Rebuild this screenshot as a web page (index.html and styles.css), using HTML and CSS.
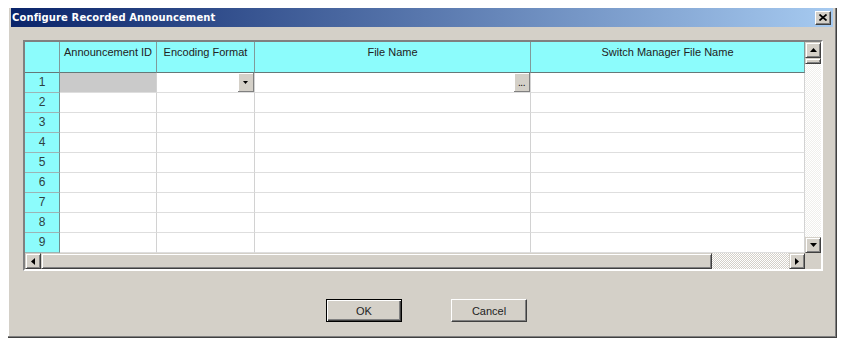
FILE: index.html
```
<!DOCTYPE html>
<html lang="en">

<head>
    <meta charset="UTF-8">
    <title>Configure Recorded Announcement</title>
    <link rel="stylesheet" href="styles.css">
</head>

<body>
    <div class="dialog">
        <div class="titlebar">
            <span class="title">Configure Recorded Announcement</span>
            <button class="close-btn" type="button">
                <svg width="8" height="7" viewBox="0 0 8 7">
                    <path d="M0.5 0.5 L7.5 6.5 M7.5 0.5 L0.5 6.5" stroke="#000" stroke-width="1.7" fill="none"/>
                </svg>
            </button>
        </div>

        <div class="client">
            <div class="grid">
                <div class="grid-top">
                    <div class="sheet">
                        <div class="row head">
                            <div class="cell rh"></div>
                            <div class="cell c1">Announcement ID</div>
                            <div class="cell c2">Encoding Format</div>
                            <div class="cell c3">File Name</div>
                            <div class="cell c4">Switch Manager File Name</div>
                        </div>
                        <div class="row">
                            <div class="cell rh">1</div>
                            <div class="cell c1 locked"></div>
                            <div class="cell c2">
                                <span class="cell-btn">
                                    <svg width="5" height="3" viewBox="0 0 5 3"><polygon points="0,0 5,0 2.5,3" fill="#000"/></svg>
                                </span>
                            </div>
                            <div class="cell c3"><span class="cell-btn dots">...</span></div>
                            <div class="cell c4"></div>
                        </div>
                        <div class="row"><div class="cell rh">2</div><div class="cell c1"></div><div class="cell c2"></div><div class="cell c3"></div><div class="cell c4"></div></div>
                        <div class="row"><div class="cell rh">3</div><div class="cell c1"></div><div class="cell c2"></div><div class="cell c3"></div><div class="cell c4"></div></div>
                        <div class="row"><div class="cell rh">4</div><div class="cell c1"></div><div class="cell c2"></div><div class="cell c3"></div><div class="cell c4"></div></div>
                        <div class="row"><div class="cell rh">5</div><div class="cell c1"></div><div class="cell c2"></div><div class="cell c3"></div><div class="cell c4"></div></div>
                        <div class="row"><div class="cell rh">6</div><div class="cell c1"></div><div class="cell c2"></div><div class="cell c3"></div><div class="cell c4"></div></div>
                        <div class="row"><div class="cell rh">7</div><div class="cell c1"></div><div class="cell c2"></div><div class="cell c3"></div><div class="cell c4"></div></div>
                        <div class="row"><div class="cell rh">8</div><div class="cell c1"></div><div class="cell c2"></div><div class="cell c3"></div><div class="cell c4"></div></div>
                        <div class="row"><div class="cell rh">9</div><div class="cell c1"></div><div class="cell c2"></div><div class="cell c3"></div><div class="cell c4"></div></div>
                    </div>

                    <div class="vscroll">
                        <span class="sb-btn">
                            <svg width="7" height="4" viewBox="0 0 7 4"><polygon points="3.5,0 7,4 0,4" fill="#000"/></svg>
                        </span>
                        <span class="sb-thumb v"></span>
                        <span class="sb-track light"></span>
                        <span class="sb-btn">
                            <svg width="7" height="4" viewBox="0 0 7 4"><polygon points="0,0 7,0 3.5,4" fill="#000"/></svg>
                        </span>
                    </div>
                </div>

                <div class="hscroll-row">
                    <div class="hscroll">
                        <span class="sb-btn">
                            <svg width="4" height="7" viewBox="0 0 4 7"><polygon points="4,0 4,7 0,3.5" fill="#000"/></svg>
                        </span>
                        <span class="sb-thumb h"></span>
                        <span class="sb-track"></span>
                        <span class="sb-btn">
                            <svg width="4" height="7" viewBox="0 0 4 7"><polygon points="0,0 4,3.5 0,7" fill="#000"/></svg>
                        </span>
                    </div>
                    <div class="corner"></div>
                </div>
            </div>

            <div class="actions">
                <button class="btn default" type="button"><span>OK</span></button>
                <button class="btn" type="button"><span>Cancel</span></button>
            </div>
        </div>
    </div>
</body>

</html>
```

FILE: styles.css
```
body {
    margin: 8px 8px 0;
    background-color: #fff;
    font-family: "Liberation Sans", Arial, sans-serif;
    font-size: 11px;
    color: #1e1e1e;
}

.dialog {
    box-sizing: border-box;
    width: 829px;
    height: 330px;
    padding: 0 3px 3px 3px;
    background-color: #d4d0c8;
    border-right: 1px solid #404040;
    border-bottom: 1px solid #404040;
    box-shadow: inset -1px -1px #808080, inset 1px 0 #ffffff;
    display: flex;
    flex-direction: column;
}

/* title bar */
.titlebar {
    height: 19px;
    display: flex;
    align-items: center;
    justify-content: space-between;
    padding: 0 2px 0 1px;
    background: linear-gradient(to right, #0a246a, #a6caf0);
}

.title {
    font-family: "DejaVu Sans", Verdana, sans-serif;
    font-weight: bold;
    font-size: 10px;
    color: #fff;
    letter-spacing: 0.1px;
}

.close-btn {
    box-sizing: border-box;
    width: 16px;
    height: 14px;
    padding: 0;
    display: flex;
    align-items: center;
    justify-content: center;
    background-color: #d4d0c8;
    border: 1px solid;
    border-color: #fff #404040 #404040 #fff;
    box-shadow: inset -1px -1px #808080;
}

.client {
    flex: 1;
    padding: 13px 10px 0 12px;
}

/* grid */
.grid {
    box-sizing: border-box;
    width: 800px;
    height: 231px;
    border: 2px solid;
    border-color: #808080 #fff #fff #808080;
    box-shadow: inset 1px 1px #404040;
    background-color: #d4d0c8;
}

.grid-top {
    display: flex;
}

.sheet {
    width: 780px;
    background-color: #fff;
}

.row {
    display: flex;
    height: 20px;
}

.row.head {
    height: 31px;
}

.cell {
    position: relative;
    box-sizing: border-box;
    flex: none;
    border-right: 1px solid #d2d2d2;
    border-bottom: 1px solid #dedede;
}

.c1 { width: 97px; }
.c2 { width: 98px; }
.c3 { width: 276px; }
.c4 { width: 274px; }

.cell.rh {
    width: 35px;
    background-color: #8cfcfc;
    border-right: 1px solid #6f8f8f;
    border-bottom: 1px solid #9cb4b4;
    text-align: center;
    line-height: 19px;
    font-size: 12px;
    color: #2f3f3f;
}

.head .cell {
    background-color: #8cfcfc;
    border-right: 1px solid #809a9a;
    border-bottom: 1px solid #667878;
    text-align: center;
    padding-top: 4px;
    color: #222;
}

.cell.locked {
    background-color: #cacaca;
}

.cell-btn {
    position: absolute;
    top: 0;
    right: 0;
    box-sizing: border-box;
    width: 16px;
    height: 19px;
    display: flex;
    align-items: center;
    justify-content: center;
    background-color: #d4d0c8;
    border-right: 1px solid #808080;
    border-bottom: 1px solid #808080;
    box-shadow: inset 1px 1px #fff;
}

.cell-btn.dots {
    align-items: flex-end;
    padding-bottom: 4px;
    font-size: 10px;
    line-height: 8px;
    color: #000;
    letter-spacing: -0.5px;
}

/* scrollbars */
.vscroll {
    width: 16px;
    display: flex;
    flex-direction: column;
}

.sb-btn {
    box-sizing: border-box;
    flex: none;
    width: 16px;
    height: 16px;
    display: flex;
    align-items: center;
    justify-content: center;
    background-color: #d4d0c8;
    border: 1px solid;
    border-color: #d4d0c8 #404040 #404040 #d4d0c8;
    box-shadow: inset 1px 1px #fff, inset -1px -1px #808080;
}

.sb-thumb {
    box-sizing: border-box;
    flex: none;
    background-color: #d4d0c8;
    border: 1px solid;
    border-color: #d4d0c8 #404040 #404040 #d4d0c8;
    box-shadow: inset 1px 1px #fff, inset -1px -1px #808080;
}

.sb-thumb.v {
    height: 6px;
}

.sb-thumb.h {
    width: 671px;
}

.sb-track {
    flex: 1;
    background: repeating-conic-gradient(#fff 0 25%, #d4d0c8 0 50%) 0 0 / 2px 2px;
}

.sb-track.light {
    background: repeating-conic-gradient(#fff 0 25%, #f0efec 0 50%) 0 0 / 2px 2px;
}

.hscroll-row {
    display: flex;
    height: 16px;
}

.hscroll {
    width: 780px;
    display: flex;
}

.corner {
    width: 16px;
    background-color: #d4d0c8;
}

/* buttons */
.actions {
    display: flex;
    justify-content: center;
    gap: 49px;
    margin-top: 28px;
    padding-left: 7px;
}

.btn {
    box-sizing: border-box;
    width: 76px;
    height: 23px;
    padding: 0;
    font-family: "Liberation Sans", Arial, sans-serif;
    font-size: 11px;
    color: #1e1e1e;
    background-color: #d4d0c8;
    border: 1px solid;
    border-color: #fff #404040 #404040 #fff;
    box-shadow: inset -1px -1px #808080;
}

.btn.default {
    border: 1px solid #000;
    box-shadow: inset 1px 1px #fff, inset -1px -1px #404040, inset -2px -2px #808080;
}
```
